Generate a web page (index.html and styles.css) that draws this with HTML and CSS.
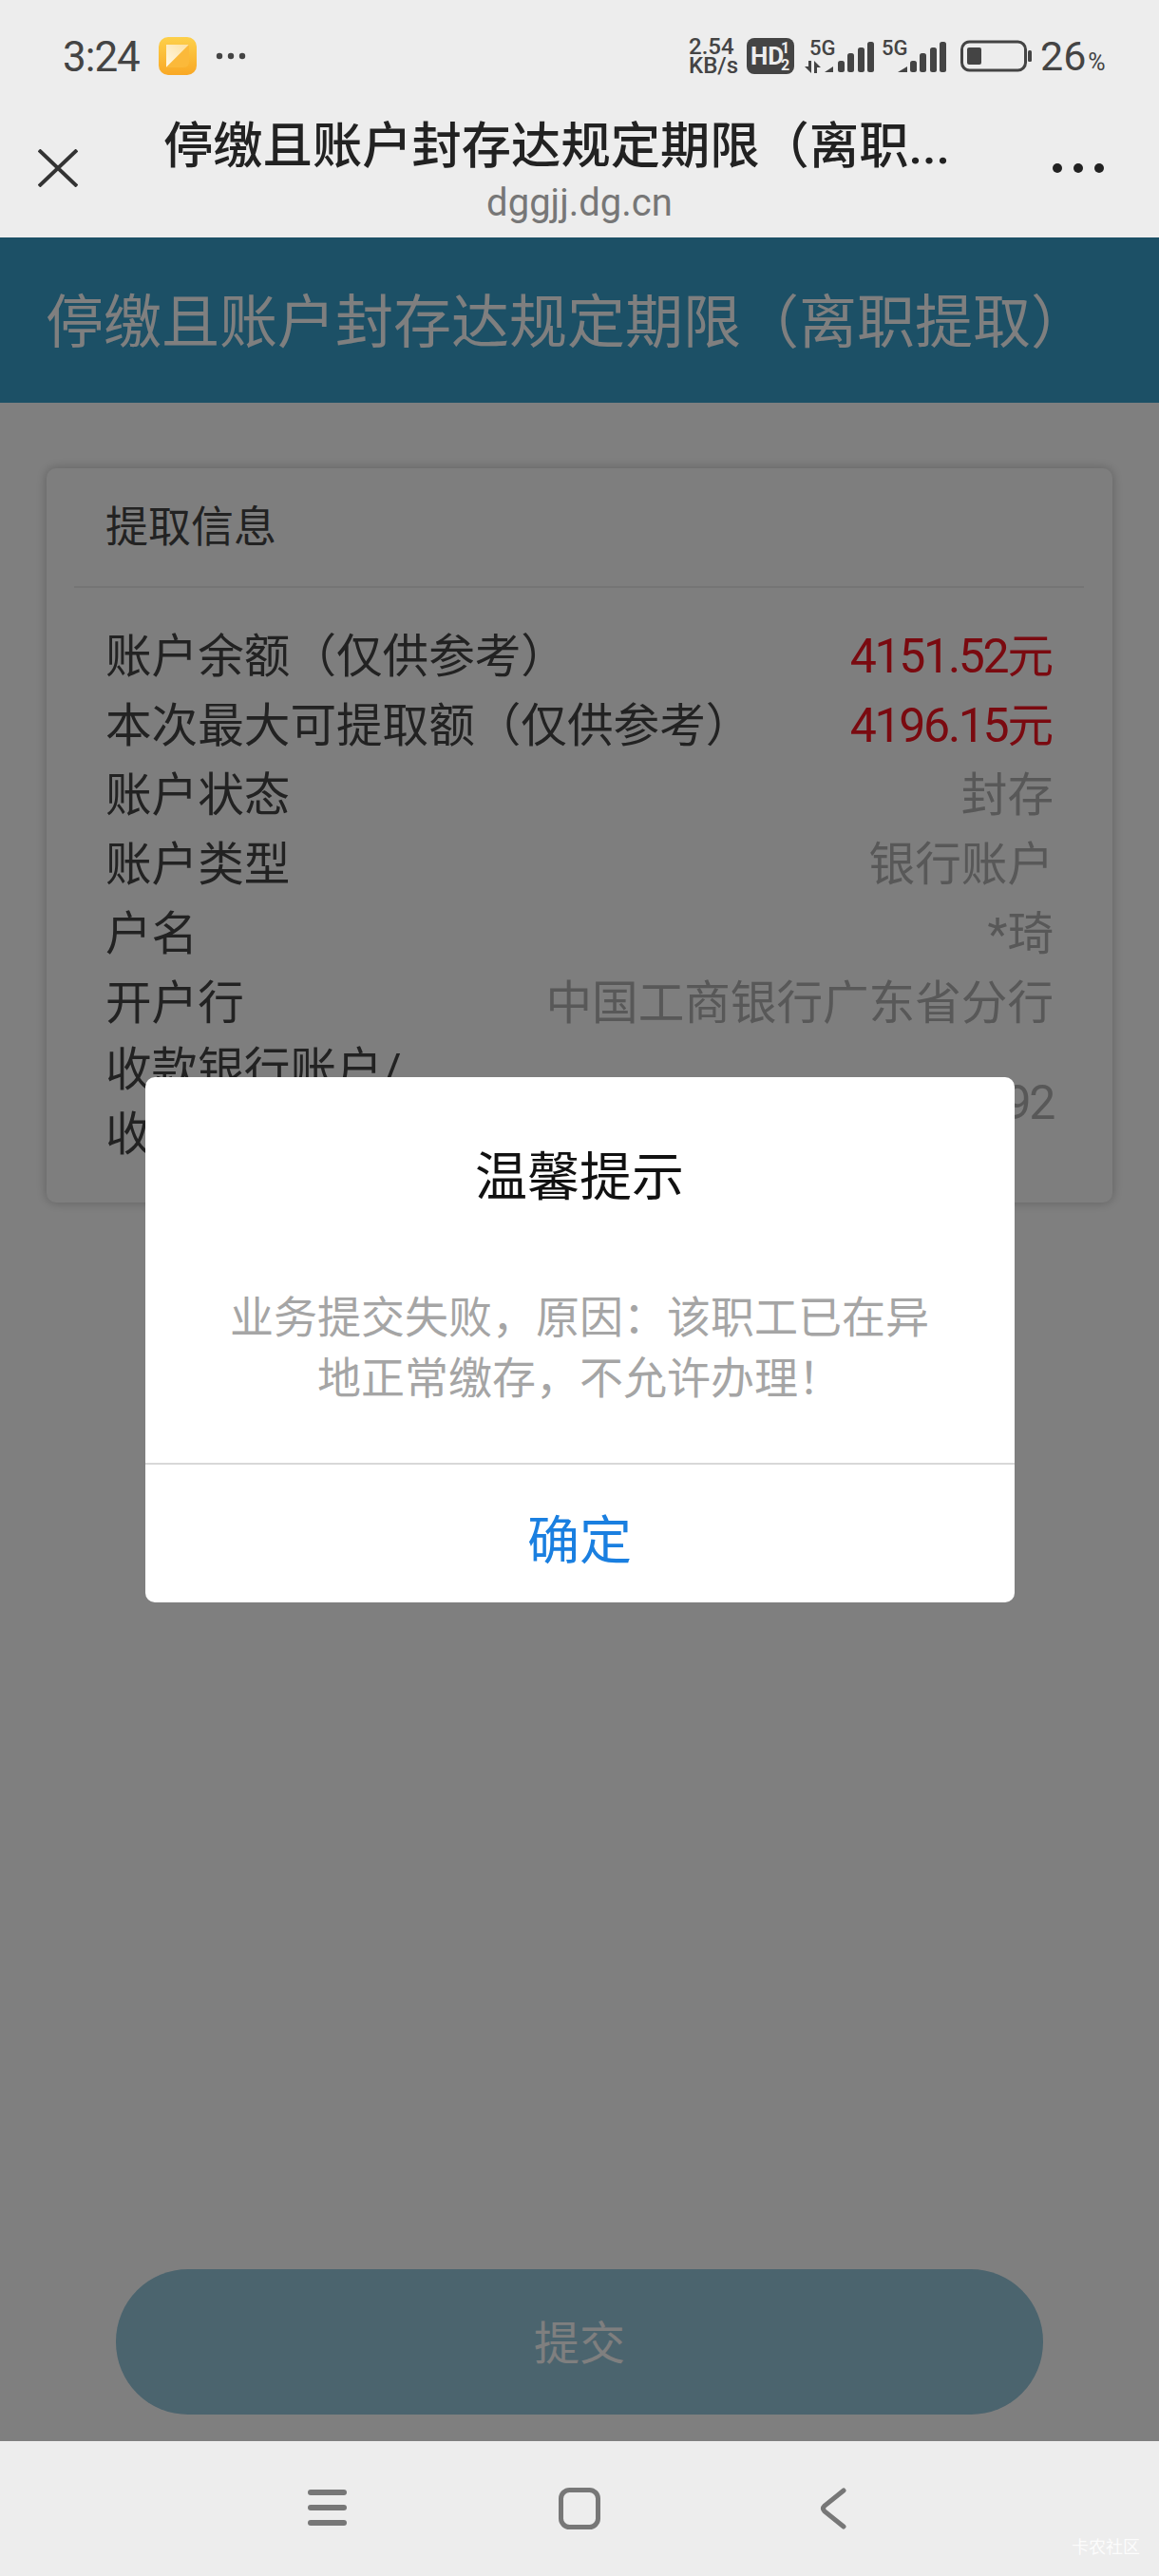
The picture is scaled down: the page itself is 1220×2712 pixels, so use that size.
FILE: index.html
```html
<!DOCTYPE html>
<html lang="zh-CN">
  <head>
    <meta charset="UTF-8" />
    <meta name="viewport" content="width=device-width, initial-scale=1" />
    <title>停缴且账户封存达规定期限（离职提取）</title>
    <link rel="stylesheet" href="styles.css">
  </head>
  <body>
    <div class="browser-top">
      <div class="status-bar">
        <span class="time">3:24</span>
        <svg class="notes-icon" width="40" height="40" viewBox="0 0 40 40">
          <defs>
            <linearGradient id="notesBg" x1="0" y1="0" x2="0" y2="1">
              <stop offset="0" stop-color="#fdd04a" />
              <stop offset="1" stop-color="#f9a825" />
            </linearGradient>
            <linearGradient id="notesFold" x1="0" y1="1" x2="1" y2="0">
              <stop offset="0" stop-color="#fff8e6" />
              <stop offset="1" stop-color="#fde0a0" />
            </linearGradient>
          </defs>
          <rect width="40" height="40" rx="10" fill="url(#notesBg)" />
          <path d="M8 8H32L8 32Z" fill="url(#notesFold)" />
          <path d="M32 8V26Q32 32 26 32H8Z" fill="#fbb93a" />
        </svg>
        <svg class="more-small" width="32" height="8" viewBox="0 0 32 8">
          <circle cx="4" cy="4" r="3.2" />
          <circle cx="16" cy="4" r="3.2" />
          <circle cx="28" cy="4" r="3.2" />
        </svg>
        <div class="status-right">
          <div class="speed">2.54<br />KB/s</div>
          <svg width="50" height="38" viewBox="0 0 50 38">
            <rect width="50" height="38" rx="8" fill="#444" />
            <text x="4" y="28" class="hd-text">HD</text>
            <text x="36" y="16" class="hd-small">1</text>
            <text x="36" y="34" class="hd-small">2</text>
          </svg>
          <svg width="152" height="44" viewBox="0 -3 152 44">
            <text x="6" y="17.5" class="net-text">5G</text>
            <path d="M8 24V37L1 30H5V24ZM11 37V24L18 31H14V37Z" fill="#444" />
            <path d="M22 36L31 30V36Z" fill="#444" />
            <rect x="36" y="24" width="7" height="12" rx="2.5" fill="#444" />
            <rect x="46" y="16" width="7" height="20" rx="2.5" fill="#444" />
            <rect x="57" y="10" width="7" height="26" rx="2.5" fill="#444" />
            <rect x="67" y="4" width="7" height="32" rx="2.5" fill="#444" />
            <text x="82" y="17.5" class="net-text">5G</text>
            <path d="M99 36L109 30V36Z" fill="#444" />
            <rect x="112" y="24" width="7" height="12" rx="2.5" fill="#444" />
            <rect x="122" y="16" width="7" height="20" rx="2.5" fill="#444" />
            <rect x="133" y="10" width="7" height="26" rx="2.5" fill="#444" />
            <rect x="143" y="4" width="7" height="32" rx="2.5" fill="#444" />
          </svg>
          <svg class="battery" width="76" height="34" viewBox="0 0 76 34">
            <rect x="1.5" y="2" width="67" height="30" rx="8" fill="none" stroke="#444" stroke-width="3" />
            <rect x="7" y="8" width="15" height="18" rx="2" fill="#444" />
            <rect x="71" y="11" width="4" height="12" rx="1.5" fill="#444" />
          </svg>
          <div class="battery-num">26<span class="percent">%</span></div>
        </div>
      </div>
      <div class="title-bar">
        <div class="close-cell">
          <svg width="42" height="40" viewBox="0 0 42 40">
            <path d="M1 1L41 39M41 1L1 39" fill="none" stroke="#333" stroke-width="4" />
          </svg>
        </div>
        <div class="page-info">
          <div class="page-title">停缴且账户封存达规定期限（离职...</div>
          <div class="page-url">dggjj.dg.cn</div>
        </div>
        <div class="menu-cell">
          <svg width="54" height="12" viewBox="0 0 54 12">
            <circle cx="5" cy="6" r="5" />
            <circle cx="27" cy="6" r="5" />
            <circle cx="49" cy="6" r="5" />
          </svg>
        </div>
      </div>
    </div>

    <div class="web-page">
      <div class="page-header">停缴且账户封存达规定期限（离职提取）</div>

      <div class="info-card">
        <div class="card-head"><span>提取信息</span></div>
        <div class="card-rows">
          <div class="info-row"><span>账户余额（仅供参考）</span><span class="money"><b>4151.52</b>元</span></div>
          <div class="info-row"><span>本次最大可提取额（仅供参考）</span><span class="money"><b>4196.15</b>元</span></div>
          <div class="info-row"><span>账户状态</span><span class="value">封存</span></div>
          <div class="info-row"><span>账户类型</span><span class="value">银行账户</span></div>
          <div class="info-row"><span>户名</span><span class="value">*琦</span></div>
          <div class="info-row"><span>开户行</span><span class="value">中国工商银行广东省分行</span></div>
          <div class="info-row two-line"><span>收款银行账户/<br />收</span><span class="value account">92</span></div>
        </div>
      </div>

      <button class="submit-btn" type="button">提交</button>

      <!-- dark mask with the alert on top -->
      <div class="mask">
        <div class="dialog">
          <div class="dialog-title">温馨提示</div>
          <div class="dialog-text">业务提交失败，原因：该职工已在异地正常缴存，不允许办理！</div>
          <div class="dialog-ok">确定</div>
        </div>
      </div>
    </div>

    <div class="nav-bar">
      <svg width="41" height="40" viewBox="0 0 41 40">
        <rect y="2" width="41" height="6" rx="3" />
        <rect y="18" width="41" height="6" rx="3" />
        <rect y="34" width="41" height="6" rx="3" />
      </svg>
      <svg width="44" height="44" viewBox="0 0 44 44">
        <rect x="2.5" y="2.5" width="39" height="39" rx="9" fill="none" stroke="#777" stroke-width="5" />
      </svg>
      <svg width="28" height="44" viewBox="0 0 28 44">
        <path d="M25 3L5 19Q2 22 5 25L25 41" fill="none" stroke="#777" stroke-width="5" stroke-linecap="round" />
      </svg>
      <span class="watermark">卡农社区</span>
    </div>
  </body>
</html>
```

FILE: styles.css
```css
* {
  box-sizing: border-box;
}

body {
  margin: 0;
  width: 1220px;
  height: 2712px;
  display: flex;
  flex-direction: column;
  overflow: hidden;
  background-color: #ffffff;
  font-family: Roboto, "Noto Sans CJK SC", sans-serif;
}

.browser-top {
  height: 250px;
  background-color: #ededed;
}

.status-bar {
  height: 118px;
  padding: 0 57px 0 66px;
  display: flex;
  align-items: center;
  color: #444;
}

.time {
  font-size: 44px;
  width: 80px;
  letter-spacing: -1px;
  padding-top: 2px;
}

.notes-icon {
  margin-left: 21px;
}

.more-small {
  margin-left: 20px;
  fill: #444;
}

.status-right {
  margin-left: auto;
  display: flex;
  align-items: center;
  gap: 10px;
}

.speed {
  width: 51px;
  font-size: 24px;
  line-height: 20px;
  font-weight: 500;
  white-space: nowrap;
}

.hd-text {
  font-size: 26px;
  font-weight: 700;
  fill: #ededed;
}

.hd-small {
  font-size: 16px;
  font-weight: 700;
  fill: #ededed;
}

.net-text {
  font-size: 22px;
  font-weight: 500;
  fill: #444;
}

.battery {
  margin-left: 3px;
}

.battery-num {
  width: 68px;
  margin-left: -2px;
  font-size: 43px;
  font-weight: 400;
  white-space: nowrap;
}

.percent {
  font-size: 25px;
  margin-left: 2px;
}

.title-bar {
  height: 132px;
  display: flex;
}

.close-cell {
  width: 172px;
  padding: 39px 0 0 40px;
}

.page-info {
  width: 876px;
}

.page-title {
  padding-top: 2px;
  font-size: 52.3px;
  line-height: 68px;
  font-weight: 500;
  color: #222;
  white-space: nowrap;
}

.page-url {
  padding-top: 1px;
  font-size: 40px;
  line-height: 50px;
  color: #777;
  text-align: center;
}

.menu-cell {
  flex: 1;
  padding: 53px 58px 0 0;
  display: flex;
  justify-content: flex-end;
  align-items: flex-start;
  fill: #222;
}

.web-page {
  position: relative;
  flex: 1;
  display: flex;
  flex-direction: column;
  background-color: #ffffff;
}

.page-header {
  height: 174px;
  padding: 0 0 6px 48px;
  display: flex;
  align-items: center;
  background-color: #38a0cc;
  color: #ffffff;
  font-size: 61px;
  white-space: nowrap;
}

.info-card {
  margin: 69px 49px 0;
  height: 773px;
  border-radius: 10px;
  background-color: #fcfcfc;
  box-shadow: 0 0 12px rgba(0, 0, 0, 0.25);
  color: #444;
}

.card-head {
  margin: 0 30px 0 29px;
  padding: 33px 0 31px 33px;
  border-bottom: 2px solid #eaeaea;
  font-size: 45px;
  line-height: 60px;
}

.card-rows {
  padding: 31px 62px 0 62px;
}

.info-row {
  height: 73px;
  display: flex;
  justify-content: space-between;
  align-items: center;
  font-size: 48.6px;
  white-space: nowrap;
}

.two-line {
  height: 136px;
  margin-top: 5px;
  line-height: 68px;
}

.value {
  color: #b0b0b0;
}

.money {
  color: #f51420;
}

.money b,
.account {
  font-family: Roboto, sans-serif;
  font-weight: 400;
  font-size: 50px;
  letter-spacing: -2.3px;
}

.submit-btn {
  margin: auto 122px 28px;
  height: 153px;
  padding: 0 0 6px;
  border: none;
  border-radius: 76px;
  background-color: #97c8dc;
  color: #ffffff;
  font-family: inherit;
  font-size: 48px;
}

.mask {
  position: absolute;
  top: 0;
  right: 0;
  bottom: 0;
  left: 0;
  display: flex;
  align-items: center;
  justify-content: center;
  background-color: rgba(0, 0, 0, 0.5);
}

.dialog {
  width: 915px;
  height: 553px;
  border-radius: 10px;
  background-color: #ffffff;
  text-align: center;
}

.dialog-title {
  padding-top: 70px;
  font-size: 55px;
  line-height: 70px;
  color: #111;
}

.dialog-text {
  height: 268px;
  padding: 81px 85px 0;
  border-bottom: 2px solid #d8d8d8;
  font-size: 46px;
  line-height: 64px;
  color: #a5a5a5;
}

.dialog-ok {
  height: 145px;
  padding-top: 6px;
  display: flex;
  align-items: center;
  justify-content: center;
  font-size: 55px;
  color: #1a7fe0;
}

.nav-bar {
  position: relative;
  height: 142px;
  padding: 49px 0 0 324px;
  display: flex;
  align-items: flex-start;
  background-color: #ededed;
  fill: #777;
}

.nav-bar svg:nth-child(2) {
  margin-left: 223px;
}

.nav-bar svg:nth-child(3) {
  margin-left: 231px;
}

.watermark {
  position: absolute;
  right: 20px;
  bottom: 18px;
  font-size: 18px;
  line-height: 24px;
  color: rgba(255, 255, 255, 0.85);
}
```
